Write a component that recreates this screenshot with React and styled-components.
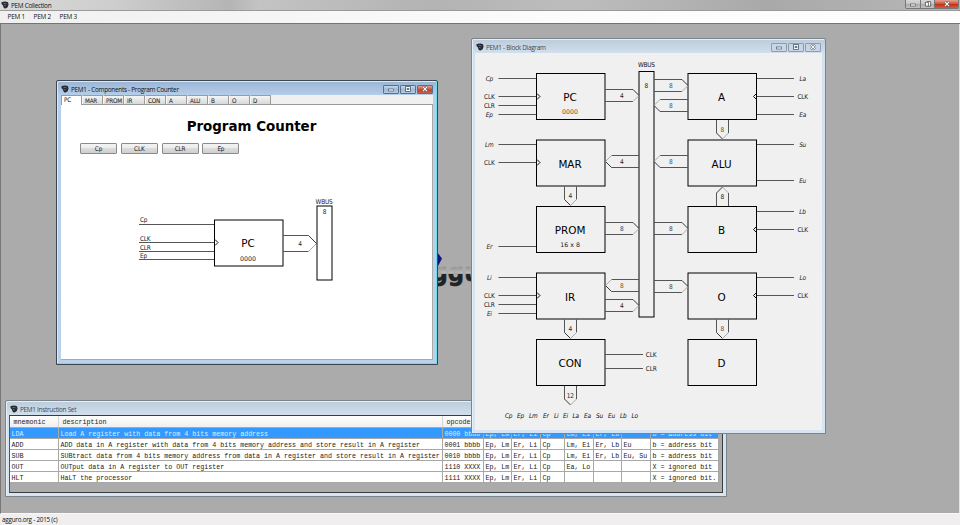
import React from "react";
import styled, { createGlobalStyle, css } from "styled-components";

const GlobalStyle = createGlobalStyle`
  html, body { margin: 0; padding: 0; overflow: hidden; }
  *, *::before, *::after { box-sizing: border-box; }
`;

const uiFont = `"DejaVu Sans Condensed", "DejaVu Sans", sans-serif`;

const Shell = styled.div`
  width: 960px;
  height: 525px;
  display: flex;
  flex-direction: column;
  overflow: hidden;
  background: #ababab;
  color: #111;
  font-family: "Open Sans", "Noto Sans", sans-serif;
  font-size: 6.4px;
  letter-spacing: -0.28px;
  line-height: 1;
  white-space: nowrap;
`;

const AppBar = styled.header`
  flex: none;
  height: 11px;
  display: flex;
  align-items: center;
  gap: 2px;
  padding-left: 1px;
  background: linear-gradient(100deg, #d9d9d9 0, #cdcdcd 12%, #b5b5b5 24%, #c3c3c3 27%, #b3b3b3 45%, #bdbdbd 60%, #a9a9a9 80%, #b7b7b7 100%);
  border-bottom: 1px solid #999;
`;

const AppTitle = styled.span`
  flex: 1;
  padding-top: 1.5px;
`;

const AppControls = styled.div`
  align-self: flex-start;
  display: flex;
  height: 9px;
  margin-right: 1px;
  border: 1px solid #777;
  border-top: 0;
  border-radius: 0 0 2px 2px;
  overflow: hidden;
`;

const AppControl = styled.span`
  width: ${(p) => (p.$close ? 24 : 14)}px;
  display: flex;
  align-items: center;
  justify-content: center;
  border-left: ${(p) => (p.$first ? "0" : "1px solid #777")};
  background: ${(p) =>
    p.$close
      ? "linear-gradient(#e3a494 0, #d4563c 45%, #bd2f16 50%, #d75a3c 100%)"
      : "linear-gradient(#d8d8d8 0, #c6c6c6 45%, #a9a9a9 50%, #c2c2c2 100%)"};
`;

const MenuBar = styled.nav`
  flex: none;
  height: 13px;
  display: flex;
  align-items: center;
  gap: 10px;
  padding: 1px 0 0 7.5px;
  background: linear-gradient(90deg, #f0f0f0 0, #f5f5f5 25%, #fcfcfc 60%, #fdfdfd 100%);
  border-bottom: 1px solid #747474;
`;

const MenuItem = styled.span`
  width: 16px;
  letter-spacing: -0.2px;
`;

const Workspace = styled.main`
  position: relative;
  flex: 1;
  background: #ababab;
  border-left: 1px solid #777;
  border-right: 1px solid #e4e4e4;
  border-bottom: 1px solid #f8f8f8;
`;

const StatusBar = styled.footer`
  flex: none;
  height: 11px;
  padding: 3px 2px 0;
  background: #f0eeee;
  font-size: 6.3px;
  letter-spacing: -0.22px;
`;

const frameLooks = {
  active: css`
    padding: 0 4px 4px;
    border: 1px solid #3d4650;
    background: linear-gradient(#9ab5d4 0, #b6cfea 15px, #b9d1ea 100%);
    box-shadow: inset -1px -1px 0 #6fdcf0, inset 1px 1px 0 #dbeaf8;
  `,
  inactive: css`
    padding: 0 3px 3px;
    border: 1px solid #7b838b;
    background: linear-gradient(#bccbd9 0, #d3e1ef 15px, #d7e4f2 100%);
    box-shadow: inset 1px 1px 0 #e6eef6;
  `,
};

const Frame = styled.section`
  position: absolute;
  left: ${(p) => p.$x}px;
  top: ${(p) => p.$y}px;
  width: ${(p) => p.$w}px;
  height: ${(p) => p.$h}px;
  display: flex;
  flex-direction: column;
  border-radius: 2px 2px 0 0;
  ${(p) => frameLooks[p.$look]}
`;

const FrameBar = styled.div`
  flex: none;
  height: 14px;
  display: flex;
  align-items: center;
  gap: 2px;
  padding: 2px ${(p) => (p.$dim ? 1 : 0)}px 0;
  color: ${(p) => (p.$dim ? "#3f4750" : "#111")};
`;

const FrameTitle = styled.span`
  flex: 1;
  padding-top: 1.5px;
`;

const FrameControls = styled.div`
  display: flex;
  gap: 1px;
`;

const FrameControl = styled.span`
  width: 16px;
  height: 9px;
  display: flex;
  align-items: center;
  justify-content: center;
  border: 1px solid ${(p) => (p.$dim ? "#8d9dad" : "#59708a")};
  border-radius: 1px;
  background: ${(p) =>
    p.$dim
      ? "#c6d6e6"
      : p.$close
        ? "linear-gradient(#dba095 0, #c9503b 50%, #b83923 50%, #cb6147 100%)"
        : "linear-gradient(#c5d9ee 0, #9fb9d6 50%, #b3cbe5 100%)"};
`;

const FrameBody = styled.div`
  flex: 1;
  min-height: 0;
  display: flex;
  flex-direction: column;
  background: #f0f0f0;
`;

const TabStrip = styled.div`
  flex: none;
  height: 10px;
  display: flex;
  align-items: flex-end;
  background: #f0f0f0;
  border-bottom: 1px solid #9a9a9a;
`;

const Tab = styled.span`
  width: 21px;
  height: ${(p) => (p.$selected ? 10 : 9)}px;
  padding: ${(p) => (p.$selected ? "1px 0 0 2px" : "1.5px 0 0 2px")};
  margin-bottom: ${(p) => (p.$selected ? "-1px" : 0)};
  border: 1px solid #9c9c9c;
  border-left-color: ${(p) => (p.$selected ? "#9c9c9c" : "#f6f6f6")};
  border-bottom: 0;
  background: ${(p) => (p.$selected ? "#fff" : "linear-gradient(#f4f4f4, #d8d8d8)")};
  font-family: ${uiFont};
  font-size: 6.3px;
  letter-spacing: -0.2px;
`;

const TabPage = styled.div`
  flex: 1;
  display: flex;
  flex-direction: column;
  background: #fff;
  border: solid #aaa;
  border-width: 0 1px 1px 0;
`;

const PageTitle = styled.h1`
  margin: 14px 0 0 10px;
  text-align: center;
  font: bold 13.4px/16px "DejaVu Sans", sans-serif;
  letter-spacing: 0;
  color: #000;
`;

const ButtonRow = styled.div`
  display: flex;
  gap: 3.8px;
  padding: 8px 0 0 19px;
`;

const PinButton = styled.button`
  width: 37px;
  height: 11px;
  padding: 1px 0 0;
  border: 1px solid #8b8b8b;
  border-radius: 1px;
  background: linear-gradient(#f3f3f3 0, #ebebeb 50%, #dcdcdc 50%, #cfcfcf 100%);
  color: #222;
  font: 6.4px/1 ${uiFont};
  letter-spacing: -0.2px;
`;

const PageGap = styled.div`
  flex: none;
  height: 36px;
`;

const Drawing = styled.svg`
  display: block;
  flex: none;
`;

const Wordmark = styled.svg`
  position: absolute;
  left: 399px;
  top: 222px;
`;

const Grid = styled.div`
  flex: 1;
  border: 1px solid #3c3c3c;
  border-left-color: #555;
  background: #ababab;
  font-family: "Liberation Mono", "Courier New", monospace;
  font-size: 6.667px;
  letter-spacing: 0;
`;

const GridRow = styled.div`
  display: grid;
  grid-template-columns: 49px 384px 41px 28px 29px 24px 29px 28px 29px 68px;
  width: 709px;
  height: ${(p) => (p.$head ? 12 : 11)}px;
  color: ${(p) => (p.$selected ? "#dcecff" : "#222")};
  background: ${(p) => (p.$head ? "linear-gradient(#fff, #eee)" : p.$selected ? "#3399ff" : "#fff")};
`;

const Cell = styled.span`
  overflow: hidden;
  padding: ${(p) => (p.$head ? "3px 0 0 3.5px" : "2.5px 0 0 1.4px")};
  border-right: 1px solid ${(p) => (p.$head ? "#d4d4d4" : "#a8a8a8")};
  border-bottom: 1px solid #a8a8a8;
  color: inherit;
`;

const CrowIcon = () => (
  <svg width="8" height="8" viewBox="0 0 8 8">
    <path d="M.3 1.5 2 .7 4.5.5 7 1.2 7.6 3.6 6.6 6.2 4 7.7 2.4 6.2 2 4.4.7 3.2Z" fill="#22252d" />
    <path d="M2.3 2.8 4 2.2 5.2 3.3M3 4.4l1.8.6" stroke="#9aa3b4" strokeWidth=".6" fill="none" />
    <path d="M5.5 2.3 6.4 3.6" stroke="#5b6a8a" strokeWidth=".6" />
  </svg>
);

const MinGlyph = () => (
  <svg width="8" height="6" viewBox="0 0 8 6">
    <rect x="1.5" y="3" width="5" height="2" fill="#fff" stroke="#4e5a68" strokeWidth=".7" />
  </svg>
);

const MaxGlyph = () => (
  <svg width="8" height="6" viewBox="0 0 8 6">
    <rect x="1.5" y=".6" width="5" height="4.8" fill="#fff" stroke="#4e5a68" strokeWidth=".8" />
    <rect x="3" y="2.2" width="2" height="1.6" fill="#8294a8" stroke="#4e5a68" strokeWidth=".5" />
  </svg>
);

const RestoreGlyph = () => (
  <svg width="8" height="6" viewBox="0 0 8 6">
    <path d="M3.4.6h3.2v4.6H3.4Z" fill="#fff" stroke="#4e4e4e" strokeWidth=".8" />
    <path d="M1.4 1.2h3v4h-3Z" fill="#fff" stroke="#4e4e4e" strokeWidth=".8" />
  </svg>
);

const CloseGlyph = () => (
  <svg width="8" height="6" viewBox="0 0 8 6">
    <path d="M2 .8 6 5.2M6 .8 2 5.2" stroke="#4b4f58" strokeWidth="2.2" />
    <path d="M2 .8 6 5.2M6 .8 2 5.2" stroke="#fff" strokeWidth="1.2" />
  </svg>
);

const WindowButtons = ({ dim }) => (
  <FrameControls>
    <FrameControl $dim={dim}><MinGlyph /></FrameControl>
    <FrameControl $dim={dim}><MaxGlyph /></FrameControl>
    <FrameControl $dim={dim} $close><CloseGlyph /></FrameControl>
  </FrameControls>
);

const SvgText = styled.text`
  font-family: ${(p) => (p.$wide ? `"DejaVu Sans", sans-serif` : uiFont)};
  font-size: ${(p) => p.$size || 6.5}px;
  font-style: ${(p) => (p.$italic ? "italic" : "normal")};
  letter-spacing: ${(p) => (p.$wide ? 0 : -0.25)}px;
  text-anchor: ${(p) => p.$anchor || "middle"};
  fill: ${(p) => p.$fill || "#222"};
`;

const Block = ({ x, y, w = 68.5, h = 46, name, note, noteFill }) => (
  <g>
    <rect x={x} y={y} width={w} height={h} fill="none" stroke="#000" />
    <SvgText $wide $size={10.4} $fill="#000" x={x + w / 2 - 0.7} y={y + 27.6}>{name}</SvgText>
    {note && <SvgText $wide $size={6.3} $fill={noteFill} x={x + w / 2 - 0.7} y={y + 40.6}>{note}</SvgText>}
  </g>
);

/* Bus arrow drawn from its open end (x1, y1) to its tip (x2, y2). */
const Arrow = ({ x1, x2, y1, y2, half = 6, head = 6, label, fill, labelX }) => {
  const flat = y1 === y2;
  const s = Math.sign(flat ? x2 - x1 : y2 - y1);
  const sides = flat
    ? `M${x1} ${y1 - half}H${x2 - s * head}M${x1} ${y1 + half}H${x2 - s * head}`
    : `M${x1 - half} ${y1}V${y2 - s * head}M${x1 + half} ${y1}V${y2 - s * head}`;
  const darkEdge = flat
    ? `M${x2 - s * head} ${y1 - s * half}L${x2} ${y1}`
    : `M${x1 - half} ${y2 - s * head}L${x1} ${y2}`;
  const lightEdge = flat
    ? `M${x2 - s * head} ${y1 + s * half}L${x2} ${y1}`
    : `M${x1 + half} ${y2 - s * head}L${x1} ${y2}`;
  return (
    <g fill="none">
      <path d={sides} stroke="#555" />
      <path d={darkEdge} stroke="#222" strokeWidth=".9" />
      <path d={lightEdge} stroke="#aaa" />
      <SvgText $fill={fill} x={labelX || (flat ? 0.5 * (x1 + x2) : x1 - 0.3)} y={flat ? y1 + 2.4 : (y1 + y2) / 2 + 2.4}>{label}</SvgText>
    </g>
  );
};

const LeftPin = ({ y, name }) => {
  const plain = name.startsWith("CL");
  return (
    <g>
      <path d={`M498.5 ${y}H536`} stroke="#555" />
      <SvgText $italic={!plain} x="489.3" y={y + 2.4}>{name}</SvgText>
      {name === "CLK" && <path d={`M537 ${y - 3}l3 3-3 3`} stroke="#111" fill="none" />}
    </g>
  );
};

const RightPin = ({ y, name }) => {
  const plain = name.startsWith("CL");
  return (
    <g>
      <path d={`M757 ${y}H794`} stroke="#555" />
      <SvgText $italic={!plain} x="802.6" y={y + 2.4}>{name}</SvgText>
      {name === "CLK" && <path d={`M756.5 ${y - 3}l-3 3 3 3`} stroke="#111" fill="none" />}
    </g>
  );
};

const leftPins = [
  [78.5, "Cp"], [96.5, "CLK"], [105.5, "CLR"], [114.5, "Ep"],
  [144.5, "Lm"], [162.5, "CLK"], [246.5, "Er"],
  [277.5, "Li"], [295.5, "CLK"], [304.5, "CLR"], [313.5, "Ei"],
];

const rightPins = [
  [78.5, "La"], [96.5, "CLK"], [114.5, "Ea"], [144.5, "Su"], [180.5, "Eu"],
  [211.5, "Lb"], [229.5, "CLK"], [277.5, "Lo"], [295.5, "CLK"],
];

const blocks = [
  { x: 536.5, y: 73.5, name: "PC", note: "0000", noteFill: "#7a4a1c" },
  { x: 536.5, y: 140, name: "MAR" },
  { x: 536.5, y: 206.5, name: "PROM", note: "16 x 8" },
  { x: 536.5, y: 273, name: "IR" },
  { x: 536.5, y: 339.5, name: "CON" },
  { x: 688, y: 73.5, name: "A" },
  { x: 688, y: 140, name: "ALU" },
  { x: 688, y: 206.5, name: "B" },
  { x: 688, y: 273, name: "O" },
  { x: 688, y: 339.5, name: "D" },
];

const arrows = [
  [605, 639, 95.5, 95.5, "4"], [639, 605.5, 161.5, 161.5, "4"],
  [605, 639, 228.5, 228.5, "8", "#1d4766"], [639, 605.5, 285.5, 285.5, "8", "#7a4a2c"],
  [605, 639, 305.5, 305.5, "4"], [654, 688, 85.5, 85.5, "8", "#235a8c"],
  [688, 654, 105.5, 105.5, "8", "#235a8c"], [688, 654, 161.5, 161.5, "8", "#235a8c"],
  [654, 688, 228.5, 228.5, "8", "#1d4766"], [654, 688, 286.5, 286.5, "8", "#1d4766"],
  [570.5, 570.5, 186.5, 205.5, "4"], [722.5, 722.5, 120, 139, "8", "#7a4a2c"],
  [722.5, 722.5, 206, 187, "8"], [570.5, 570.5, 319.5, 338.5, "4"],
  [722.5, 722.5, 319.5, 338.5, "8", "#7a4a2c"], [570.5, 570.5, 386, 405, "12"],
];

const controlWord = [
  [505, "Cp"], [517, "Ep"], [529, "Lm"], [543, "Er"], [554, "Li"], [563, "Ei"],
  [572.5, "La"], [584, "Ea"], [596, "Su"], [608, "Eu"], [620, "Lb"], [631.5, "Lo"],
];

const BlockDiagram = () => (
  <Drawing width="347" height="377" viewBox="475 53 347 377">
    <SvgText x="646.3" y="66.9" $fill="#112">WBUS</SvgText>
    <rect x="639" y="71.5" width="15" height="245.5" fill="none" stroke="#000" />
    <SvgText x="646.3" y="87.9">8</SvgText>
    {blocks.map((b) => <Block key={b.name} {...b} />)}
    {arrows.map(([x1, x2, y1, y2, label, fill], i) => (
      <Arrow key={i} x1={x1} x2={x2} y1={y1} y2={y2} label={label} fill={fill} labelX={y1 === y2 ? (x1 < 640 && x2 < 640 ? 621.8 : 670.8) : undefined} />
    ))}
    {leftPins.map(([y, name]) => <LeftPin key={y} y={y} name={name} />)}
    {rightPins.map(([y, name]) => <RightPin key={y} y={y} name={name} />)}
    <path d="M605 354.5H643M605 368.5H643" stroke="#555" />
    <SvgText $anchor="start" x="645.8" y="356.9">CLK</SvgText>
    <SvgText $anchor="start" x="645.8" y="370.9">CLR</SvgText>
    {controlWord.map(([x, word]) => (
      <SvgText key={word} $anchor="start" $italic $fill="#111" x={x} y="418">{word}</SvgText>
    ))}
  </Drawing>
);

const CounterDiagram = () => (
  <Drawing width="371" height="150" viewBox="61 190 371 150">
    <rect x="214.5" y="220" width="68.5" height="46" fill="none" stroke="#000" />
    <SvgText $wide $size={10.4} $fill="#000" x="248" y="247.4">PC</SvgText>
    <SvgText $wide $size={6.3} x="248" y="260.6">0000</SvgText>
    <path d="M139 224.5H214M139 242.5H214M139 251.5H214M139 259.5H214" stroke="#555" />
    <path d="M215 239.5l3 3-3 3" stroke="#111" fill="none" />
    <SvgText $anchor="start" x="140" y="222.1">Cp</SvgText>
    <SvgText $anchor="start" x="140" y="240.8">CLK</SvgText>
    <SvgText $anchor="start" x="140" y="249.9">CLR</SvgText>
    <SvgText $anchor="start" x="140" y="257.9">Ep</SvgText>
    <Arrow x1={283} x2={316.5} y1={243.5} y2={243.5} half={8} head={8} label="4" labelX={300} />
    <SvgText x="324" y="203.6">WBUS</SvgText>
    <rect x="317" y="206" width="15" height="74" fill="none" stroke="#000" />
    <SvgText x="324.4" y="213.9">8</SvgText>
  </Drawing>
);

const instructions = [
  ["LDA", "Load A register with data from 4 bits memory address", "0000 bbbb", "Ep, Lm", "Er, Li", "Cp", "Lm, Ei", "Er, Lb", "", "b = address bit"],
  ["ADD", "ADD data in A register with data from 4 bits memory address and store result in A register", "0001 bbbb", "Ep, Lm", "Er, Li", "Cp", "Lm, Ei", "Er, Lb", "Eu", "b = address bit"],
  ["SUB", "SUBtract data from 4 bits memory address from data in A register and store result in A register", "0010 bbbb", "Ep, Lm", "Er, Li", "Cp", "Lm, Ei", "Er, Lb", "Eu, Su", "b = address bit"],
  ["OUT", "OUTput data in A register to OUT register", "1110 XXXX", "Ep, Lm", "Er, Li", "Cp", "Ea, Lo", "", "", "X = ignored bit"],
  ["HLT", "HaLT the processor", "1111 XXXX", "Ep, Lm", "Er, Li", "Cp", "", "", "", "X = ignored bit."],
];
const headings = ["mnemonic", "description", "opcode", "", "", "", "", "", "", ""];
const tabs = ["PC", "MAR", "PROM", "IR", "CON", "A", "ALU", "B", "O", "D"];

export default function App() {
  return (
    <Shell>
      <GlobalStyle />
      <AppBar>
        <CrowIcon />
        <AppTitle>PEM Collection</AppTitle>
        <AppControls>
          <AppControl $first><MinGlyph /></AppControl>
          <AppControl><RestoreGlyph /></AppControl>
          <AppControl $close><CloseGlyph /></AppControl>
        </AppControls>
      </AppBar>
      <MenuBar>
        <MenuItem>PEM 1</MenuItem>
        <MenuItem>PEM 2</MenuItem>
        <MenuItem>PEM 3</MenuItem>
      </MenuBar>
      <Workspace>
        <Wordmark width="84" height="50" viewBox="400 246 84 50">
          <defs>
            <linearGradient id="mark" gradientUnits="userSpaceOnUse" x1="0" x2="0" y1="265" y2="287">
              <stop offset="0" stopColor="#858585" />
              <stop offset=".38" stopColor="#bebebe" />
              <stop offset=".42" stopColor="#222" />
              <stop offset="1" stopColor="#222" />
            </linearGradient>
          </defs>
          <path d="M428 262 437 252 442 258.5 438 266Z" fill="#13137c" />
          <text x="431.5" y="280.5" textLength="49" lengthAdjust="spacingAndGlyphs" fontFamily="DejaVu Sans, sans-serif" fontWeight="bold" fontSize="24" letterSpacing="0" stroke="url(#mark)" strokeWidth=".5" fill="url(#mark)">ggu</text>
        </Wordmark>
        <Frame $look="inactive" $x={4} $y={376} $w={722} $h={97}>
          <FrameBar $dim>
            <CrowIcon />
            <FrameTitle>PEM1 Instruction Set</FrameTitle>
          </FrameBar>
          <Grid>
            <GridRow $head>
              {headings.map((h, i) => <Cell key={i} $head>{h}</Cell>)}
            </GridRow>
            {instructions.map((row, r) => (
              <GridRow key={row[0]} $selected={r === 0}>
                {row.map((value, i) => <Cell key={i}>{value}</Cell>)}
              </GridRow>
            ))}
          </Grid>
        </Frame>
        <Frame $look="active" $x={55} $y={56} $w={382} $h={285}>
          <FrameBar>
            <CrowIcon />
            <FrameTitle>PEM1 - Components - Program Counter</FrameTitle>
            <WindowButtons />
          </FrameBar>
          <FrameBody>
            <TabStrip>
              {tabs.map((t, i) => <Tab key={t} $selected={i === 0}>{t}</Tab>)}
            </TabStrip>
            <TabPage>
              <PageTitle>Program Counter</PageTitle>
              <ButtonRow>
                {["Cp", "CLK", "CLR", "Ep"].map((b) => <PinButton key={b}>{b}</PinButton>)}
              </ButtonRow>
              <PageGap />
              <CounterDiagram />
            </TabPage>
          </FrameBody>
        </Frame>
        <Frame $look="inactive" $x={470} $y={14} $w={355} $h={396}>
          <FrameBar $dim>
            <CrowIcon />
            <FrameTitle>PEM1 - Block Diagram</FrameTitle>
            <WindowButtons dim />
          </FrameBar>
          <FrameBody>
            <BlockDiagram />
          </FrameBody>
        </Frame>
      </Workspace>
      <StatusBar>agguro.org - 2015 (c)</StatusBar>
    </Shell>
  );
}
